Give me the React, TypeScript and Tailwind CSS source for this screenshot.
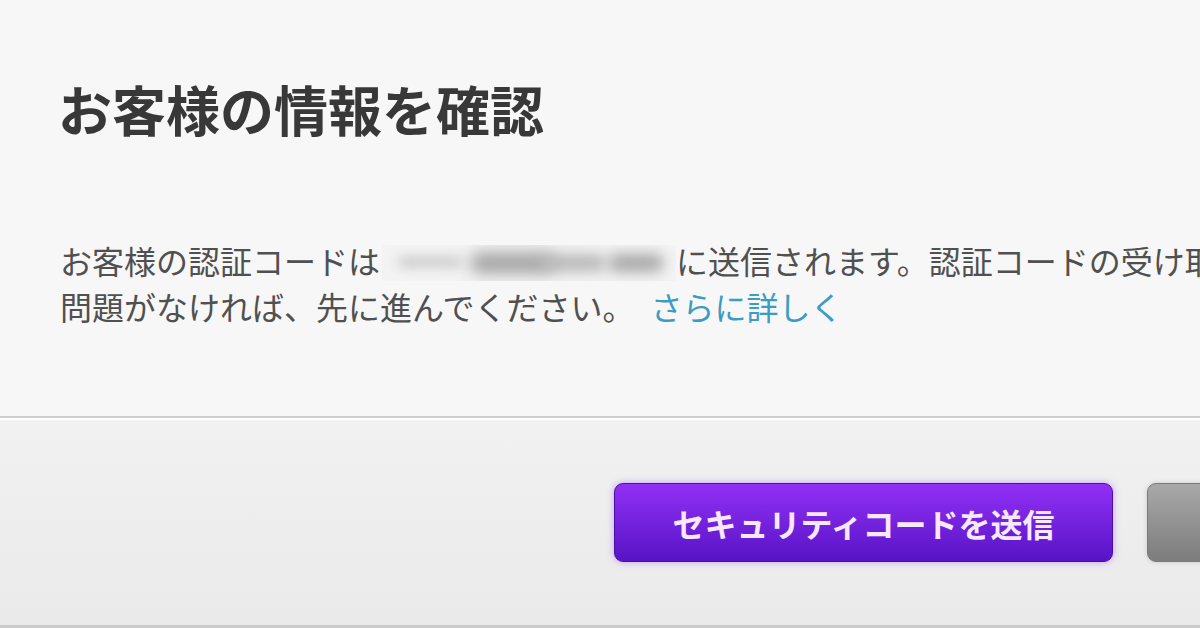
export default function App() {
  return (
    <div className="w-[1200px] h-[628px] overflow-hidden flex flex-col bg-[#f7f7f7] font-['Noto_Sans_CJK_JP','Noto_Sans',sans-serif]">
      <div className="h-[416px] shrink-0 pl-[60px] pt-[82px] whitespace-nowrap">
        <h1 className="-ml-[2px] text-[54px] leading-[54px] font-bold text-[#383838]">
          お客様の情報を確認
        </h1>
        <p className="mt-[101px] text-[32px] leading-[46px] text-[#505050]">
          お客様の認証コードは
          <span className="inline-block align-middle w-[294px] h-[36px] ml-[2px] -mt-[4px] relative bg-[#f3f3f3] overflow-hidden">
            <span className="absolute left-[16px] top-[12px] w-[64px] h-[10px] rounded-full bg-[#c8c8c8] blur-[6px]" />
            <span className="absolute left-[88px] top-[8px] w-[84px] h-[20px] rounded-full bg-[#a0a0a0] blur-[8px]" />
            <span className="absolute left-[160px] top-[10px] w-[64px] h-[16px] rounded-full bg-[#b4b4b4] blur-[7px]" />
            <span className="absolute left-[226px] top-[9px] w-[56px] h-[18px] rounded-full bg-[#a8a8a8] blur-[7px]" />
          </span>
          に送信されます。認証コードの受け取り
          <br />
          問題がなければ、先に進んでください。
          <a className="ml-[16px] text-[#3b9cc4]">さらに詳しく</a>
        </p>
      </div>
      <div className="h-[2px] shrink-0 bg-[#cdcdcd]" />
      <div className="h-[2px] shrink-0 bg-white" />
      <div className="flex-1 bg-gradient-to-b from-[#f1f1f1] to-[#eaeaea] flex items-start pl-[614px] pt-[63px] gap-[34px]">
        <button className="shrink-0 w-[499px] h-[79px] rounded-[9px] border border-[#4a0ea0] bg-gradient-to-b from-[#922ff5] to-[#5812c6] shadow-[0_0_7px_rgba(160,90,255,0.55)] text-[32px] font-bold text-[#f6e8ff] leading-none whitespace-nowrap">
          セキュリティコードを送信
        </button>
        <div className="shrink-0 w-[200px] h-[79px] rounded-[9px] border border-[#7a7a7a] bg-gradient-to-b from-[#a9a9a9] to-[#7c7c7c] shadow-[0_0_5px_rgba(0,0,0,0.15)]" />
      </div>
      <div className="h-[3px] shrink-0 bg-[#cbcbcb]" />
    </div>
  );
}
